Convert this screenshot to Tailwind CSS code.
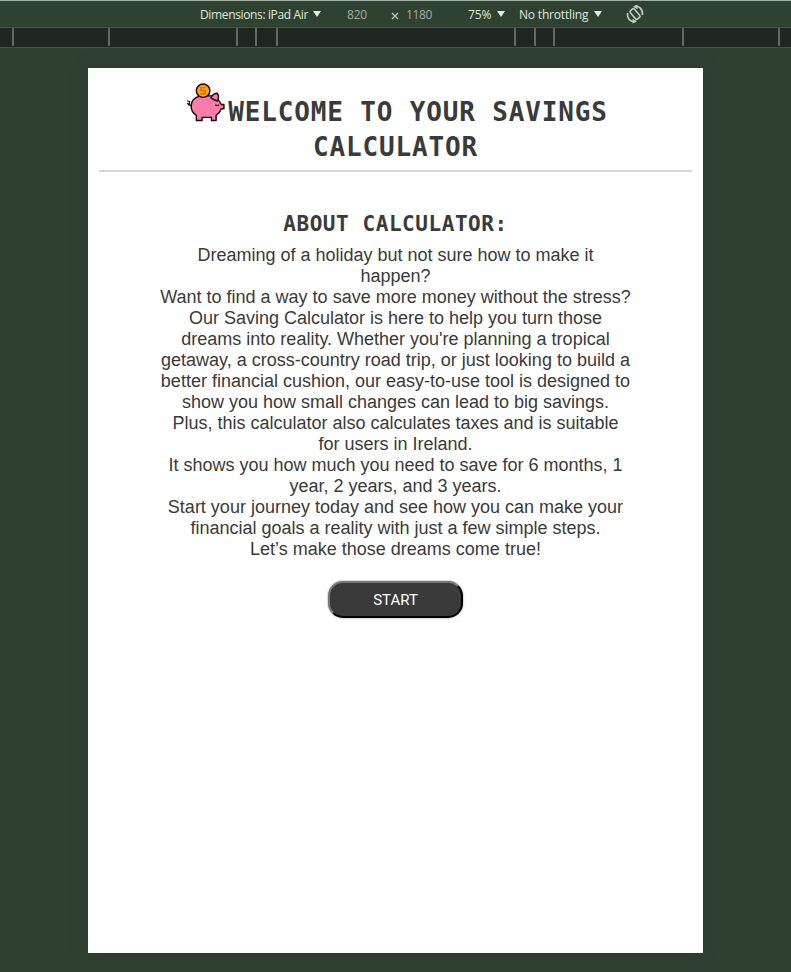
<!DOCTYPE html>
<html lang="en">
<head>
<meta charset="utf-8">
<title>Savings Calculator</title>
<script src="https://cdn.jsdelivr.net/npm/@tailwindcss/browser@4"></script>
</head>
<body class="w-[791px] h-[972px] overflow-hidden bg-[#2f4031] font-['Liberation_Sans',sans-serif]">
<header class="h-7 pt-[2px] border-t border-t-[#a3aca4] border-b border-b-[#445646] bg-[#2f4232] flex items-center text-[12px] leading-4 text-[#dfe7df] font-['Open_Sans',sans-serif] whitespace-nowrap pl-[200px]">
  <div class="w-[147px] flex items-center"><span class="w-[109px] tracking-[-0.36px]">Dimensions: iPad Air</span><svg class="ml-1 -mt-[2px]" width="8" height="6" viewBox="0 0 8 6"><path d="M0 0h8L4 6z" fill="#e3eae3"/></svg></div>
  <span class="w-[44px] text-[#a3aba3] tracking-[-0.2px]">820</span>
  <svg class="mr-[7px] mt-[2px]" width="8" height="8" viewBox="0 0 8 8"><path d="M1 1l6 6M7 1L1 7" stroke="#b9c1b9" stroke-width="1.4"/></svg>
  <span class="w-[62px] text-[#a3aba3] tracking-[-0.35px]">1180</span>
  <div class="w-[51px] flex items-center"><span class="w-[25px] tracking-[-0.1px]">75%</span><svg class="ml-1 -mt-[2px]" width="8" height="6" viewBox="0 0 8 6"><path d="M0 0h8L4 6z" fill="#e3eae3"/></svg></div>
  <div class="w-[106px] flex items-center"><span class="w-[71px] tracking-[-0.18px]">No throttling</span><svg class="ml-1 -mt-[2px]" width="8" height="6" viewBox="0 0 8 6"><path d="M0 0h8L4 6z" fill="#e3eae3"/></svg></div>
  <svg class="-mt-[2px]" width="20" height="20" viewBox="0 0 20 20" fill="none" stroke="#c3cbc3" stroke-width="1.600"><rect x="7.300" y="4.500" width="5.400" height="11" rx="1.500" transform="rotate(-40 10 10)"/><path d="M9.500 2.500c4.500-1 8.500 2.500 8 8.500M10.500 17.500c-4.500 1-8.500-2.500-8-8.500"/><path d="M8 2.800l4.500-2.300v4.800zM12 17.200l-4.500 2.300v-4.800z" fill="#c3cbc3" stroke="none"/></svg>
</header>
<div class="h-5 bg-[#202620] border-b border-[#445646] flex">
  <i class="w-[2px] h-[18px] bg-[#646964] ml-[12px]"></i>
  <i class="w-[2px] h-[18px] bg-[#646964] ml-[94px]"></i>
  <i class="w-[2px] h-[18px] bg-[#646964] ml-[126px]"></i>
  <i class="w-[2px] h-[18px] bg-[#646964] ml-[17px]"></i>
  <i class="w-[2px] h-[18px] bg-[#646964] ml-[19px]"></i>
  <i class="w-[2px] h-[18px] bg-[#646964] ml-[236px]"></i>
  <i class="w-[2px] h-[18px] bg-[#646964] ml-[18px]"></i>
  <i class="w-[2px] h-[18px] bg-[#646964] ml-[17px]"></i>
  <i class="w-[2px] h-[18px] bg-[#646964] ml-[127px]"></i>
  <i class="w-[2px] h-[18px] bg-[#646964] ml-[94px]"></i>
</div>
<main class="mt-5 ml-[88px] w-[615px] h-[885px] bg-white shadow-[0_0_12px_rgba(40,50,40,0.5)] text-[#3a3a3a] text-center whitespace-nowrap">
  <div class="mx-[11px] h-[104px] pt-[14px] border-b-2 border-[#d8d8d8]">
    <h1 class="font-['DejaVu_Sans_Mono',monospace] font-bold text-[26px] leading-[35px] tracking-[0.85px]">
      <span class="flex justify-center items-start pl-[4px]"><svg class="mr-[2px]" width="39" height="40" viewBox="0.5 0 37.500 39" preserveAspectRatio="none"><g stroke="#17090f" stroke-width="1.400" stroke-linejoin="round" stroke-linecap="round"><path d="M4.500 24C4.500 17 9.500 13.500 16 13.500h8c3 .5 6 2.500 8 6l1.500 2.500h2.500v4h-2.500c-1 3-2.500 5-5 6.500V37.500h-4.500v-3h-9v3H9.500V32.500C6 30.500 4.500 27.500 4.500 24z" fill="#fb7bab"/><circle cx="16" cy="8.500" r="6.500" fill="#f9a21f"/><path d="M23.500 15.500c1-2 3-4.500 6-4.500 1.500 2 1.500 5 0 7.500-2-.5-4-1.500-6-3z" fill="#fb7bab"/><path d="M4.500 22.500H2.500L1 21M1 18.500l2 .5-.5 3.500M28 22.500c1 .8 2 .8 3 0" fill="none" stroke-width="1.200"/></g><path d="M18.500 5.500h-4.500v3h4v3h-4.500" stroke="#dc6b12" stroke-width="1.400" fill="none"/></svg><span class="pt-[13px]">WELCOME TO YOUR SAVINGS</span></span>
      <span class="block">CALCULATOR</span>
    </h1>
  </div>
  <h2 class="mt-[38px] font-['DejaVu_Sans_Mono',monospace] font-bold text-[21px] leading-7 tracking-[0.56px]">ABOUT CALCULATOR:</h2>
  <p class="mt-[7px] text-[18px] leading-[21px]">Dreaming of a holiday but not sure how to make it<br>happen?<br>Want to find a way to save more money without the stress?<br>Our Saving Calculator is here to help you turn those<br>dreams into reality. Whether you're planning a tropical<br>getaway, a cross-country road trip, or just looking to build a<br>better financial cushion, our easy-to-use tool is designed to<br>show you how small changes can lead to big savings.<br>Plus, this calculator also calculates taxes and is suitable<br>for users in Ireland.<br>It shows you how much you need to save for 6 months, 1<br>year, 2 years, and 3 years.<br>Start your journey today and see how you can make your<br>financial goals a reality with just a few simple steps.<br>Let’s make those dreams come true!</p>
  <button class="mt-[21px] w-[135px] h-[37px] pt-[1px] rounded-[15px] border-2 border-t-[#777] border-l-[#777] border-r-black border-b-black bg-[#3a3a3a] text-white text-[15px] font-['Roboto',sans-serif] shadow-[0_0_2px_rgba(0,0,0,0.5)]">START</button>
</main>
</body>
</html>
